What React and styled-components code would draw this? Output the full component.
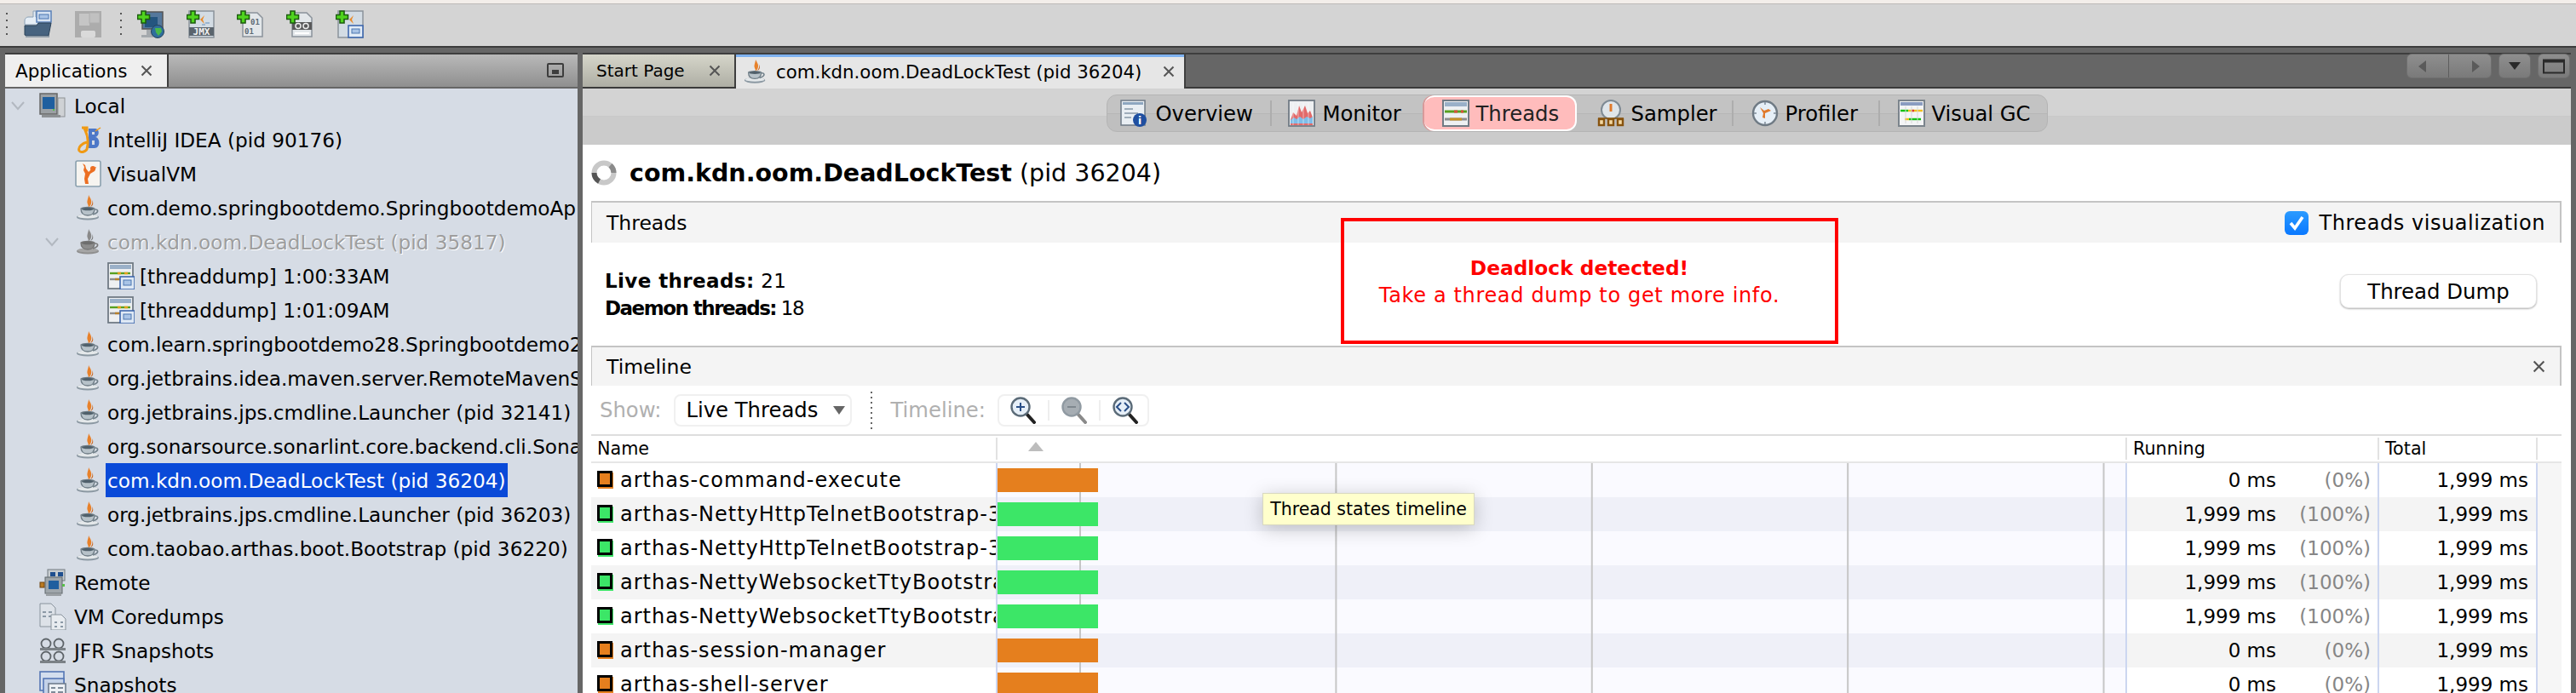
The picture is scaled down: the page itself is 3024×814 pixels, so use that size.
import React from 'react';
import styled, { createGlobalStyle } from 'styled-components';

const Global = createGlobalStyle`
  html, body { margin: 0; padding: 0; background: #666; }
  * { box-sizing: border-box; }
  body { font-family: "DejaVu Sans", "Liberation Sans", sans-serif; color: #000; }
`;

const Page = styled.div`
  width: 3024px; height: 814px; overflow: hidden;
  display: flex; flex-direction: column; background: #666;
`;
const TopStrip = styled.div`
  height: 5px; flex: none; background: #f3eeea; border-bottom: 1px solid #bdbab8;
`;
const Toolbar = styled.div`
  height: 51px; flex: none; background: #d4d4d4; border-bottom: 2px solid #3c3c3c;
  display: flex; align-items: flex-start; padding: 7px 0 0 0;
`;
const Dots = styled.div`
  width: 2px; height: 28px; margin: ${p => p.$m || '3px 0 0 7px'};
  background: repeating-linear-gradient(180deg, #555 0 2px, transparent 2px 8px);
`;
const ToolIcon = styled.svg`
  width: 33px; height: 33px; flex: none; margin-left: ${p => p.$ml}px;
  opacity: ${p => p.$dim ? 0.45 : 1};
  filter: ${p => p.$dim ? 'grayscale(1)' : 'none'};
`;
const Main = styled.div`
  flex: 1; min-height: 0; display: flex; gap: 6px; padding: 6px 6px 0 6px; background: #666;
`;
const LeftPanel = styled.section`
  width: 672px; flex: none; display: flex; flex-direction: column;
  border-top: 2px solid #3e3e3e; background: #d6dce5; overflow: hidden;
`;
const PanelHead = styled.div`
  height: 38px; flex: none; display: flex; align-items: stretch; justify-content: space-between;
  background: linear-gradient(180deg, #b9b9b9, #8f8f8f);
`;
const PanelTab = styled.div`
  width: 192px; display: flex; align-items: center; padding-left: 12px; gap: 16px;
  background: #efefef; border-right: 2px solid #3e3e3e; font-size: 21.5px;
`;
const CloseGlyph = styled.svg`
  width: ${p => p.$s || 14}px; height: ${p => p.$s || 14}px; flex: none;
`;
const Minimize = styled.div`
  width: 20px; height: 17px; margin: 10px 16px 0 0; border: 2px solid #3d3d3d; border-radius: 2px;
  display: flex; align-items: center; justify-content: center;
  &::after { content: ""; width: 8px; height: 5px; margin-top: 3px; background: #3d3d3d; }
`;
const Tree = styled.div`
  flex: 1; min-height: 0; border-top: 2px solid #666; overflow: hidden; white-space: nowrap;
`;
const TreeRow = styled.div`
  height: 40px; display: flex; align-items: center; font-size: 23.2px;
`;
const Gutter = styled.div`
  width: ${p => p.$w}px; flex: none; padding-left: ${p => p.$chev || 0}px; display: flex; align-items: center;
`;
const Chevron = styled.svg`
  width: 18px; height: 12px; flex: none;
`;
const TreeIcon = styled.svg`
  width: 32px; height: 32px; flex: none;
`;
const TreeLabel = styled.span`
  height: 40px; line-height: 41px; margin-left: ${p => p.$ml ?? 4}px; padding: 0 2px;
  background: ${p => p.$sel ? '#0a4ad8' : 'transparent'};
  color: ${p => p.$sel ? '#fff' : p.$muted ? '#9d9d9d' : '#000'};
  text-shadow: ${p => p.$muted ? '1px 1px 0 #fff' : 'none'};
`;
const RightPanel = styled.section`
  flex: 1; min-width: 0; display: flex; flex-direction: column; background: #fff;
`;
const TabBar = styled.div`
  height: 42px; flex: none; display: flex; align-items: stretch; background: #666;
  border-top: 2px solid #3e3e3e; border-bottom: 2px solid #3a3a3a;
`;
const DocTab = styled.div`
  width: ${p => p.$w}px; display: flex; align-items: center; font-size: ${p => p.$active ? 21.3 : 20}px; flex: none;
  padding-left: ${p => p.$pl}px;
  border-right: 2px solid #3e3e3e;
  background: ${p => p.$active
    ? 'linear-gradient(180deg, #7fb2f0 0 3px, #e6e6e6 3px)'
    : 'linear-gradient(180deg, #d6d6ca, #aeaea4)'};
  margin-bottom: ${p => p.$active ? '-2px' : '0'};
  position: relative;
`;
const DocTabText = styled.span`
  margin-left: ${p => p.$ml || 0}px;
`;
const TabCup = styled.svg`
  width: 30px; height: 32px; margin-left: 0; flex: none;
`;
const TabClose = styled.span`
  margin-left: ${p => p.$ml}px; display: flex;
`;
const NavButtons = styled.div`
  margin-left: auto; display: flex; gap: 8px; padding: 0 1px 0 0; align-items: flex-start;
`;
const NavBtn = styled.div`
  width: ${p => p.$w}px; height: 29px; border-radius: 6px; display: flex; margin-top: -1px;
  background: linear-gradient(180deg, #8e8e8e, #7a7a7a); border: 1px solid #6f6f6f;
  align-items: center; justify-content: space-around;
`;
const NavDiv = styled.div`
  width: 1px; align-self: stretch; background: #5d5d5d;
`;
const SubBar = styled.div`
  height: 66px; flex: none; display: flex; justify-content: center; align-items: flex-start; padding-top: 7px;
  background: linear-gradient(180deg, #d3d3d3 0 32px, #c8c8c8 32px 33px, #cbcbcb 33px);
`;
const Pill = styled.nav`
  height: 44px; display: flex; align-items: center; border-radius: 12px;
  background: linear-gradient(180deg, #c3c3c3 0 21px, #b6b6b6 21px 22px, #bfbfbf 22px);
  border: 1px solid #b4b4b4;
`;
const PillItem = styled.div`
  width: ${p => p.$w}px; height: 42px; flex: none; display: flex; align-items: center; gap: ${p => p.$gap || 8}px;
  padding-left: ${p => p.$pl}px; font-size: 24.3px; border-radius: 12px;
  ${p => p.$on ? 'background: #ffbcbc; border-bottom: 2px solid #fff; border-top: 2px solid #fff; border-right: 2px solid #fff; box-shadow: -2px 0 0 #d89a9a; color: #222;' : ''}
`;
const PillSep = styled.div`
  width: 2px; height: 30px; background: #adadad; flex: none;
`;
const PillIcon = styled.svg`
  width: 32px; height: 32px; flex: none;
`;
const Content = styled.div`
  flex: 1; min-height: 0; position: relative; padding: 0 11px 0 10px; background: #fff; overflow: hidden;
`;
const TitleRow = styled.h1`
  margin: 0; height: 66px; display: flex; align-items: center; gap: 15px; font-size: 28.5px; font-weight: 400;
`;
const Spinner = styled.svg`
  width: 30px; height: 30px; flex: none;
`;
const Strong = styled.b`
  font-weight: 700;
`;
const SectionHead = styled.div`
  height: ${p => p.$h}px; display: flex; align-items: center; justify-content: space-between;
  padding: 0 17px 0 17px; background: #f4f4f4; font-size: 23.5px;
  border-top: 2px solid #c4c4c4; border-left: 1px solid #c4c4c4; border-right: 2px solid #c4c4c4;
`;
const CheckLabel = styled.label`
  display: flex; align-items: center; gap: 12px; font-size: 24px; letter-spacing: .55px;
`;
const CheckBox = styled.span`
  width: 28px; height: 28px; border-radius: 6px; display: flex; align-items: center; justify-content: center;
  background: linear-gradient(180deg, #2b9bff, #0a78ff);
`;
const SectionBody = styled.div`
  height: 121px; display: flex; justify-content: space-between; padding: 29px 29px 0 16px;
`;
const Stats = styled.div`
  font-size: 23px; line-height: 32px;
`;
const StatLine = styled.div`
  letter-spacing: ${p => p.$ls}px;
`;
const DumpButton = styled.button`
  width: 231px; height: 40px; margin-top: 8px; border-radius: 10px; background: #fff; border: 1px solid #e2e2e2;
  box-shadow: 0 1px 2px rgba(0,0,0,.3); font: 24.4px "DejaVu Sans", sans-serif; color: #000; padding: 0;
`;
const TimelineBar = styled.div`
  height: 57px; display: flex; align-items: center; padding-left: 10px; font-size: 24.3px;
`;
const Muted = styled.span`
  color: #b0b0b0; margin-left: ${p => p.$ml || 0}px;
`;
const SelectBox = styled.div`
  width: 209px; height: 38px; margin-left: 15px; display: flex; align-items: center; justify-content: space-between;
  padding: 0 5px 0 12px; border: 2px solid #f0f0f0; border-radius: 8px; background: #fff;
`;
const Arrow = styled.svg`
  width: 16px; height: 12px; flex: none;
`;
const VDots = styled.div`
  width: 2px; height: 44px; margin-left: 22px;
  background: repeating-linear-gradient(180deg, #666 0 2px, transparent 2px 6px);
`;
const ZoomGroup = styled.div`
  width: 178px; height: 38px; margin-left: 14px; display: flex; align-items: center; padding-left: 12px; gap: 0;
  border: 2px solid #f0f0f0; border-radius: 8px;
`;
const ZoomIcon = styled.svg`
  width: 32px; height: 32px; flex: none;
`;
const ZoomSep = styled.div`
  width: 2px; height: 24px; background: #eee; margin: 0 13px; flex: none;
`;
const Table = styled.div`
  position: relative;
`;
const COLS = '475px 1326px 296px 186px 30px';
const HeadRow = styled.div`
  height: 34px; display: grid; grid-template-columns: ${COLS}; font-size: 20.7px;
  border-top: 2px solid #dedede; border-bottom: 2px solid #e6e6e6;
`;
const HeadCell = styled.div`
  display: flex; align-items: center; height: 26px; margin-top: 2px; padding-left: ${p => p.$pl || 7}px;
  border-left: ${p => p.$first ? 'none' : '2px solid #e2e2e2'};
`;
const SortMark = styled.svg`
  width: 18px; height: 11px; margin-left: 29px; margin-top: -6px;
`;
const Row = styled.div`
  height: 40px; display: grid; grid-template-columns: ${COLS}; font-size: 23px; white-space: nowrap;
`;
const NameCell = styled.div`
  display: flex; align-items: center; padding-left: 7px; overflow: hidden; font-size: 24px; letter-spacing: 1px;
  background: ${p => p.$alt ? '#f4f4f4' : '#fff'};
`;
const StateBox = styled.span`
  width: 18px; height: 19px; flex: none; margin: -4px 9px 0 0; border: 3px solid #000;
  background: ${p => p.$c}; box-shadow: 1px 2px 0 ${p => p.$c};
`;
const TimeCell = styled.div`
  padding-top: 6px;
  border-left: 2px solid #ccd6f0;
  background-color: ${p => p.$alt ? '#eff0f8' : '#fafaff'};
  background-image: linear-gradient(90deg, #c6c6c6 2px, transparent 2px);
  background-size: 300.4px 100%;
  background-position: 96px 0;
`;
const Bar = styled.div`
  width: 118px; height: 28px; background: ${p => p.$c};
`;
const NumCell = styled.div`
  display: flex; justify-content: flex-end; align-items: center; padding-right: ${p => p.$pr}px;
  border-left: 2px solid #ccd6f0; background: ${p => p.$alt ? '#f4f4f4' : '#fff'};
`;
const Pct = styled.span`
  width: 111px; text-align: right; color: #868686;
`;
const ScrollCol = styled.div`
  border-left: 2px solid #ccd6f0; background: #f6f6f6;
`;
const Tip = styled.div`
  position: absolute; left: 788px; top: 69px; width: 249px; height: 38px;
  background: #ffffcc; border: 1px solid #d8d8c0; box-shadow: 0 4px 22px rgba(0,0,0,.22);
  display: flex; align-items: center; justify-content: center; font-size: 20.5px; white-space: nowrap; z-index: 2;
`;
const Alert = styled.div`
  position: absolute; left: 890px; top: 86px; width: 584px; height: 148px; border: 4px solid #f00; color: #f00;
  display: flex; flex-direction: column; align-items: center; justify-content: center;
  padding: 2px 24px 0 0; font-size: 24px; line-height: 32px; white-space: nowrap;
`;
const AlertHead = styled.b`
  font-size: 23.3px; font-weight: 700;
`;
const AlertLine = styled.span`
  letter-spacing: .65px;
`;

const CupShapes = ({ grey }) => (
  <>
    <path d="M16 1c2 4 4 6 3 10-.6 2.400-2 3.500-3 5 .4-3-2.400-5-1.400-8.500C15 5 16 3.500 16 1z" fill={grey ? '#8a8a8a' : '#e8812a'} />
    <path d="M20 7c1 3 .5 5-2 8 3-1 4.500-4 2-8z" fill={grey ? '#777' : '#c9641c'} />
    <ellipse cx="15" cy="27" rx="13" ry="3.600" fill={grey ? '#8f8f8f' : '#8b98a2'} />
    <ellipse cx="15" cy="26" rx="12" ry="2.500" fill={grey ? '#a6a6a6' : '#e4e8ea'} />
    <path d="M7 17c3-2 13-2 16 0 0 5-2 8-8 8S7 22 7 17z" fill={grey ? '#8d8d8d' : '#b7c2c9'} stroke={grey ? '#777' : '#6f7d86'} strokeWidth="1.300" />
    <ellipse cx="15" cy="17.500" rx="7" ry="1.800" fill={grey ? '#6d6d6d' : '#50606b'} />
    <path d="M23 18c4-.5 5 2.500 1.500 4.500L21 24" fill="none" stroke={grey ? '#7a7a7a' : '#71808a'} strokeWidth="1.600" />
  </>
);
const Cup = ({ grey }) => (
  <TreeIcon viewBox="0 0 32 32"><CupShapes grey={grey} /></TreeIcon>
);
const Plus = () => (
  <path d="M5 1h5v4.500h4.500v5H10V15H5v-4.500H.5v-5H5z" fill="#4fd41e" stroke="#1d5c10" strokeWidth="1.600" />
);
const Sheet = ({ children }) => (
  <>
    <path d="M7 3h17l6 6v22H7z" fill="#e3e7ea" stroke="#8b939b" strokeWidth="1.500" />
    {children}
  </>
);
const IconOpen = () => (
  <ToolIcon $ml={19} viewBox="0 0 33 33">
    <path d="M1 12c0-2 2-4 4-4h6V1h3v7l4 3v6H1z" fill="#e6eef6" stroke="#8aa0b6" />
    <rect x="15" y="1" width="17" height="13" fill="#d8e4f2" stroke="#5a80b8" strokeWidth="1.500" />
    <rect x="18" y="5" width="11" height="5" fill="#a9c4e6" stroke="#4c76b0" />
    <path d="M1 29V18h14l2-3h15l-3 15H3z" fill="#47637f" stroke="#2b4259" />
    <rect x="2" y="30" width="28" height="2" fill="#8d9aa6" />
  </ToolIcon>
);
const IconSave = () => (
  <ToolIcon $ml={26} $dim viewBox="0 0 33 33">
    <path d="M1 1h31v31H1z" fill="#6d7f92" />
    <rect x="6" y="4" width="12" height="14" fill="#a9b6c2" />
    <rect x="18" y="3" width="12" height="12" fill="#98aabf" stroke="#6d87a6" />
    <rect x="8" y="24" width="17" height="8" rx="2" fill="#dfe3e6" />
  </ToolIcon>
);
const IconAddHost = () => (
  <ToolIcon $ml={18} viewBox="0 0 33 33">
    <rect x="6" y="2" width="24" height="20" fill="#55789c" stroke="#555" strokeWidth="1.500" />
    <rect x="9" y="8" width="15" height="12" fill="#24557f" />
    <path d="M5 29h14v3H5zM11 23h6v6h-6z" fill="#a4a9ad" />
    <circle cx="24" cy="25" r="7.500" fill="#2f6e9c" stroke="#28415a" />
    <path d="M21 21h7l1 4-4 5-3-4z" fill="#49b84a" />
    <Plus />
  </ToolIcon>
);
const IconAddJmx = () => (
  <ToolIcon $ml={25} viewBox="0 0 33 33">
    <rect x="3" y="1" width="29" height="31" fill="#d3dce4" stroke="#8b939b" strokeWidth="1.500" />
    <path d="M21 6l-5 5 5 5-2-5z" fill="#e98a2a" />
    <path d="M22 15h5M18 17h4" stroke="#8aa8c8" strokeWidth="1.500" />
    <rect x="3" y="20" width="29" height="10" fill="#5a646d" />
    <text x="17.500" y="29" textAnchor="middle" fontFamily="DejaVu Sans Mono" fontWeight="700" fontSize="11" fill="#f2f2f2">JMX</text>
    <Plus />
  </ToolIcon>
);
const IconAddCore = () => (
  <ToolIcon $ml={26} viewBox="0 0 33 33">
    <Sheet>
      <text x="16" y="17" fontFamily="DejaVu Sans Mono" fontWeight="700" fontSize="9" fill="#5c6a76">01</text>
      <text x="9" y="28" fontFamily="DejaVu Sans Mono" fontWeight="700" fontSize="9" fill="#5c6a76">01</text>
    </Sheet>
    <Plus />
  </ToolIcon>
);
const IconAddJfr = () => (
  <ToolIcon $ml={25} viewBox="0 0 33 33">
    <Sheet>
      <rect x="7" y="14" width="23" height="9" fill="#59595a" />
      <circle cx="14" cy="18.500" r="3" fill="none" stroke="#eee" strokeWidth="1.500" />
      <circle cx="23" cy="18.500" r="3" fill="none" stroke="#eee" strokeWidth="1.500" />
      <rect x="10" y="26" width="17" height="2" fill="#fff" />
    </Sheet>
    <Plus />
  </ToolIcon>
);
const IconAddSnap = () => (
  <ToolIcon $ml={25} viewBox="0 0 33 33">
    <rect x="3" y="1" width="29" height="31" fill="#d3dce4" stroke="#8b939b" strokeWidth="1.500" />
    <path d="M21 6l-5 5 5 5-2-5z" fill="#e98a2a" />
    <rect x="15" y="18" width="17" height="14" fill="#e2ecf7" stroke="#3f68ad" strokeWidth="1.600" />
    <rect x="19" y="22" width="9" height="5" fill="#a9c4e6" stroke="#4c76b0" />
    <Plus />
  </ToolIcon>
);
const IconLocal = () => (
  <TreeIcon viewBox="0 0 32 32">
    <rect x="1" y="2" width="20" height="24" fill="#9ba0a4" stroke="#666" strokeWidth="1.500" />
    <rect x="4" y="6" width="14" height="14" fill="#1f5f9f" />
    <rect x="16" y="20" width="2" height="2" fill="#58c04a" />
    <rect x="22" y="7" width="8" height="22" fill="#cfd2d5" stroke="#8d9194" />
    <rect x="3" y="27" width="22" height="3" fill="#8d9194" />
  </TreeIcon>
);
const IconIdea = () => (
  <TreeIcon viewBox="0 0 32 32">
    <path d="M16 3h8c5 0 5 9 0 10 6 1 6 13-1 13h-7z" fill="#4d78c8" />
    <rect x="20" y="7" width="3" height="3" fill="#d6dce5" />
    <rect x="20" y="17" width="3" height="5" fill="#d6dce5" />
    <path d="M8 2h6v3h-2c3 6 4 15 2 22-1 3-7 5-9 2-2-4 4-9 9-10" fill="none" stroke="#f09a14" strokeWidth="3" />
    <path d="M24 6l6-4" stroke="#f09a14" strokeWidth="1.500" />
  </TreeIcon>
);
const IconVisualVm = () => (
  <TreeIcon viewBox="0 0 32 32">
    <rect x="1" y="1" width="29" height="30" rx="2" fill="#f6f4f0" stroke="#8aa0ae" strokeWidth="1.600" />
    <path d="M9 4l2 4-1 4 2 4-1 6 1 6h4l-1-6 3-6 5-3 2-5-5 2-4 4-3-4-1-4z" fill="#ec6f22" />
    <circle cx="21" cy="10" r="3" fill="#ec6f22" />
  </TreeIcon>
);
const IconDump = () => (
  <TreeIcon viewBox="0 0 32 32">
    <rect x="1" y="1" width="29" height="30" fill="#eef0f2" stroke="#707a84" strokeWidth="1.800" />
    <rect x="3" y="3" width="25" height="5" fill="#9ab0c8" />
    <path d="M3 13h24" stroke="#58a020" strokeWidth="2.400" />
    <path d="M12 13h4M20 13h4" stroke="#e4a11b" strokeWidth="2.400" />
    <path d="M3 20h14" stroke="#8d8d8d" strokeWidth="2.400" />
    <path d="M9 20h6" stroke="#b7812e" strokeWidth="2.400" />
    <rect x="15" y="17" width="17" height="15" fill="#dfe9f5" stroke="#3f68ad" strokeWidth="1.600" />
    <rect x="19" y="21" width="9" height="6" fill="#a9c4e6" stroke="#4c76b0" />
  </TreeIcon>
);
const IconRemote = () => (
  <TreeIcon viewBox="0 0 32 32">
    <rect x="10" y="1" width="20" height="13" fill="#c6ccd0" stroke="#737a80" />
    <rect x="13" y="4" width="6" height="5" fill="#1f4f8f" />
    <rect x="22" y="4" width="6" height="5" fill="#1f4f8f" />
    <rect x="7" y="10" width="20" height="19" fill="#9fa6ab" stroke="#5f666b" />
    <rect x="11" y="14" width="12" height="10" fill="#1f5f9f" />
    <rect x="1" y="16" width="5" height="6" fill="#bb7a20" stroke="#6e4510" />
    <rect x="27" y="18" width="3" height="3" fill="#58c04a" />
    <rect x="8" y="29" width="18" height="3" fill="#9a9fa3" />
  </TreeIcon>
);
const IconCore = () => (
  <TreeIcon viewBox="0 0 32 32">
    <path d="M1 1h13l5 5v22H1z" fill="#dde2e8" stroke="#89939c" />
    <path d="M4 11h4M11 11h4M4 16h4M11 16h4" stroke="#8b99a6" strokeWidth="2" />
    <path d="M14 14h12l5 5v13H14z" fill="#e8ecf0" stroke="#89939c" />
    <path d="M18 23h3M25 23h3M18 28h3M25 28h3" stroke="#8b99a6" strokeWidth="2" />
  </TreeIcon>
);
const IconJfr = () => (
  <TreeIcon viewBox="0 0 32 32">
    <g fill="none" stroke="#5e6469" strokeWidth="1.800">
      <circle cx="8" cy="8" r="5.500" /><circle cx="23" cy="8" r="5.500" />
      <circle cx="8" cy="23" r="5.500" /><circle cx="23" cy="23" r="5.500" />
    </g>
    <rect x="1" y="13" width="30" height="3" fill="#7b8186" />
    <rect x="1" y="28" width="30" height="3" fill="#7b8186" />
  </TreeIcon>
);
const IconSnaps = () => (
  <TreeIcon viewBox="0 0 32 32">
    <rect x="1" y="1" width="28" height="22" fill="#d3deee" stroke="#5476b4" strokeWidth="1.600" />
    <rect x="5" y="9" width="24" height="18" fill="#c4d2e8" stroke="#5476b4" strokeWidth="1.600" />
    <rect x="11" y="15" width="20" height="16" fill="#eef1f5" stroke="#6f7d8e" strokeWidth="1.600" />
    <path d="M14 20h5M22 20h6M14 25h5M22 25h6" stroke="#7d8a98" strokeWidth="2" />
  </TreeIcon>
);
const NavOverview = () => (
  <PillIcon viewBox="0 0 32 32">
    <rect x="1" y="1" width="28" height="29" fill="#e9eef3" stroke="#6e7a86" strokeWidth="1.500" />
    <rect x="3" y="3" width="24" height="3" fill="#8ea6c0" />
    <path d="M5 11h10M5 16h16M5 21h8" stroke="#9fadba" strokeWidth="2" />
    <circle cx="23" cy="24" r="8" fill="#1f4fa0" />
    <text x="23" y="29" textAnchor="middle" fontFamily="DejaVu Sans" fontWeight="700" fontSize="12" fill="#fff">i</text>
  </PillIcon>
);
const NavMonitor = () => (
  <PillIcon viewBox="0 0 32 32">
    <rect x="1" y="1" width="30" height="30" fill="#eef0f2" stroke="#707a84" strokeWidth="1.800" />
    <path d="M3 24l3-9 4 4 3-12 3 8 4-8 3 9 3-3 3 8v9H3z" fill="#e26a6a" />
    <path d="M3 24l4-3 3 2 4-3 4 3 4-3 4 2 3-2v8H3z" fill="#7fbde8" />
    <path d="M6 4v26M12 4v26M18 4v26M24 4v26" stroke="#fff" strokeOpacity=".5" />
  </PillIcon>
);
const NavThreads = () => (
  <PillIcon viewBox="0 0 32 32">
    <rect x="1" y="1" width="30" height="30" fill="#eef0f2" stroke="#707a84" strokeWidth="2" />
    <rect x="3" y="3" width="26" height="5" fill="#9ab0c8" />
    <path d="M3 14h26" stroke="#58a020" strokeWidth="3" />
    <path d="M14 14h4M22 14h3" stroke="#d8503a" strokeWidth="3" />
    <path d="M3 23h26" stroke="#8d8d8d" strokeWidth="3" />
    <path d="M9 23h14" stroke="#c79226" strokeWidth="3" />
  </PillIcon>
);
const NavSampler = () => (
  <PillIcon viewBox="0 0 32 32">
    <circle cx="16" cy="12" r="11" fill="#dfe5ea" stroke="#7e8a94" strokeWidth="2" />
    <path d="M16 5v9" stroke="#e07a2c" strokeWidth="3" />
    <g fill="#f3d7a0" stroke="#87530f" strokeWidth="2.400">
      <rect x="2" y="23" width="6" height="7" /><rect x="13" y="23" width="6" height="7" /><rect x="24" y="23" width="6" height="7" />
    </g>
    <path d="M1 22h30" stroke="#87530f" strokeWidth="1.500" />
  </PillIcon>
);
const NavProfiler = () => (
  <PillIcon viewBox="0 0 32 32">
    <circle cx="16" cy="16" r="14" fill="#e6eff7" stroke="#6f7a84" strokeWidth="2.400" />
    <path d="M10 9l5 4 5-2 3 2-7 3v6l-3-1 1-5z" fill="#e07a2c" />
    <path d="M16 3v3M16 26v3M3 16h3M26 16h3" stroke="#7d8a98" strokeWidth="1.500" />
  </PillIcon>
);
const NavGc = () => (
  <PillIcon viewBox="0 0 32 32">
    <rect x="1" y="1" width="30" height="30" fill="#f4f5f6" stroke="#7b848c" strokeWidth="2" />
    <rect x="3" y="3" width="26" height="4" fill="#8a9cc0" />
    <path d="M3 13h9" stroke="#12c212" strokeWidth="2.400" />
    <path d="M12 13h17" stroke="#f0c020" strokeWidth="2.400" />
    <path d="M16 13h3" stroke="#e03a2a" strokeWidth="2.400" />
    <path d="M8 23h5" stroke="#f0c020" strokeWidth="2.400" />
    <path d="M13 23h14" stroke="#12c212" strokeWidth="2.400" />
    <path d="M9 8v20M16 8v20M23 8v20" stroke="#d8d8d8" />
  </PillIcon>
);
const Magnifier = ({ kind }) => {
  const c = kind === 'minus' ? '#909aa2' : '#5b6b78';
  return (
    <ZoomIcon viewBox="0 0 32 32">
      <path d="M20 20l9 10" stroke={kind === 'minus' ? '#8a8a8a' : '#222'} strokeWidth="4" strokeLinecap="round" />
      <circle cx="13" cy="12" r="10.500" fill={kind === 'minus' ? '#a6adb3' : '#e6eff8'} stroke={c} strokeWidth="2.400" />
      {kind === 'plus' && <path d="M13 7v10M8 12h10" stroke="#2a4f88" strokeWidth="2" />}
      {kind === 'minus' && <path d="M8 12h10" stroke="#7f888f" strokeWidth="2" />}
      {kind === 'fit' && <path d="M11 7l-5 5 5 5M15 7l5 5-5 5" fill="none" stroke="#2a4f88" strokeWidth="2" />}
    </ZoomIcon>
  );
};
const X = ({ s, c = '#555' }) => (
  <CloseGlyph $s={s} viewBox="0 0 14 14">
    <path d="M1.500 1.500l11 11M12.500 1.500l-11 11" stroke={c} strokeWidth="2" />
  </CloseGlyph>
);
const Down = () => (
  <Chevron viewBox="0 0 18 12"><path d="M2 2l7 8 7-8" fill="none" stroke="#b2b8c0" strokeWidth="2" /></Chevron>
);

const ORANGE = '#e57f1e';
const GREEN = '#3ce667';
const treeRows = [
  { w: 40, chev: 6, icon: <IconLocal />, text: 'Local', ml: 7 },
  { w: 82, icon: <IconIdea />, text: 'IntelliJ IDEA (pid 90176)' },
  { w: 82, icon: <IconVisualVm />, text: 'VisualVM' },
  { w: 82, icon: <Cup />, text: 'com.demo.springbootdemo.SpringbootdemoAp' },
  { w: 82, chev: 46, icon: <Cup grey />, text: 'com.kdn.oom.DeadLockTest (pid 35817)', muted: true },
  { w: 120, icon: <IconDump />, text: '[threaddump] 1:00:33AM' },
  { w: 120, icon: <IconDump />, text: '[threaddump] 1:01:09AM' },
  { w: 82, icon: <Cup />, text: 'com.learn.springbootdemo28.Springbootdemo2' },
  { w: 82, icon: <Cup />, text: 'org.jetbrains.idea.maven.server.RemoteMavenS' },
  { w: 82, icon: <Cup />, text: 'org.jetbrains.jps.cmdline.Launcher (pid 32141)' },
  { w: 82, icon: <Cup />, text: 'org.sonarsource.sonarlint.core.backend.cli.Sona' },
  { w: 82, icon: <Cup />, text: 'com.kdn.oom.DeadLockTest (pid 36204)', sel: true },
  { w: 82, icon: <Cup />, text: 'org.jetbrains.jps.cmdline.Launcher (pid 36203)' },
  { w: 82, icon: <Cup />, text: 'com.taobao.arthas.boot.Bootstrap (pid 36220)' },
  { w: 40, icon: <IconRemote />, text: 'Remote', ml: 7 },
  { w: 40, icon: <IconCore />, text: 'VM Coredumps', ml: 7 },
  { w: 40, icon: <IconJfr />, text: 'JFR Snapshots', ml: 7 },
  { w: 40, icon: <IconSnaps />, text: 'Snapshots', ml: 7 },
];
const threads = [
  ['arthas-command-execute', ORANGE, '0 ms', '(0%)'],
  ['arthas-NettyHttpTelnetBootstrap-3', GREEN, '1,999 ms', '(100%)'],
  ['arthas-NettyHttpTelnetBootstrap-3', GREEN, '1,999 ms', '(100%)'],
  ['arthas-NettyWebsocketTtyBootstrap', GREEN, '1,999 ms', '(100%)'],
  ['arthas-NettyWebsocketTtyBootstrap', GREEN, '1,999 ms', '(100%)'],
  ['arthas-session-manager', ORANGE, '0 ms', '(0%)'],
  ['arthas-shell-server', ORANGE, '0 ms', '(0%)'],
];

export default function App() {
  return (
    <Page>
      <Global />
      <TopStrip />
      <Toolbar>
        <Dots />
        <IconOpen />
        <IconSave />
        <Dots $m="3px 0 0 21px" />
        <IconAddHost />
        <IconAddJmx />
        <IconAddCore />
        <IconAddJfr />
        <IconAddSnap />
      </Toolbar>
      <Main>
        <LeftPanel>
          <PanelHead>
            <PanelTab>Applications <X /></PanelTab>
            <Minimize />
          </PanelHead>
          <Tree>
            {treeRows.map((r, i) => (
              <TreeRow key={i}>
                <Gutter $w={r.w} $chev={r.chev}>{r.chev ? <Down /> : null}</Gutter>
                {r.icon}
                <TreeLabel $ml={r.ml} $sel={r.sel} $muted={r.muted}>{r.text}</TreeLabel>
              </TreeRow>
            ))}
          </Tree>
        </LeftPanel>
        <RightPanel>
          <TabBar>
            <DocTab $w={180} $pl={16}>
              <DocTabText>Start Page</DocTabText>
              <TabClose $ml={28}><X /></TabClose>
            </DocTab>
            <DocTab $w={528} $pl={8} $active>
              <TabCup viewBox="0 0 32 32"><CupShapes /></TabCup>
              <DocTabText $ml={9}>com.kdn.oom.DeadLockTest (pid 36204)</DocTabText>
              <TabClose $ml={25}><X /></TabClose>
            </DocTab>
            <NavButtons>
              <NavBtn $w={100}>
                <svg width="10" height="14" viewBox="0 0 10 14"><path d="M9 0v14L0 7z" fill="#5a5a5a" /></svg>
                <NavDiv />
                <svg width="10" height="14" viewBox="0 0 10 14"><path d="M1 0v14l9-7z" fill="#5a5a5a" /></svg>
              </NavBtn>
              <NavBtn $w={38}>
                <svg width="14" height="9" viewBox="0 0 14 9"><path d="M0 0h14L7 9z" fill="#2a2a2a" /></svg>
              </NavBtn>
              <NavBtn $w={38}>
                <svg width="26" height="18" viewBox="0 0 26 18"><rect x="1" y="1.500" width="24" height="15" fill="none" stroke="#2a2a2a" strokeWidth="2" /><rect x="1" y="1" width="24" height="3.500" fill="#2a2a2a" /></svg>
              </NavBtn>
            </NavButtons>
          </TabBar>
          <SubBar>
            <Pill>
              <PillItem $w={191} $pl={15} $gap={10}><NavOverview />Overview</PillItem>
              <PillSep />
              <PillItem $w={179} $pl={19} $gap={9}><NavMonitor />Monitor</PillItem>
              <PillItem $w={179} $pl={21} $on><NavThreads />Threads</PillItem>
              <PillItem $w={182} $pl={24}><NavSampler />Sampler</PillItem>
              <PillSep />
              <PillItem $w={170} $pl={21}><NavProfiler />Profiler</PillItem>
              <PillSep />
              <PillItem $w={196} $pl={21}><NavGc />Visual GC</PillItem>
            </Pill>
          </SubBar>
          <Content>
            <TitleRow>
              <Spinner viewBox="0 0 30 30">
                <circle cx="15" cy="15" r="11.500" fill="none" stroke="#c8c8c8" strokeWidth="6" />
                <path d="M3.500 15a11.500 11.500 0 0 0 6 10" fill="none" stroke="#555" strokeWidth="6" />
                <path d="M26.500 15a11.500 11.500 0 0 0-4-8.700" fill="none" stroke="#8a8a8a" strokeWidth="6" />
              </Spinner>
              <span><Strong>com.kdn.oom.DeadLockTest</Strong> (pid 36204)</span>
            </TitleRow>
            <SectionHead $h={49}>
              <span>Threads</span>
              <CheckLabel>
                <CheckBox>
                  <svg width="20" height="18" viewBox="0 0 20 18"><path d="M3 9l5 6L17 2" fill="none" stroke="#fff" strokeWidth="3.600" /></svg>
                </CheckBox>
                Threads visualization
              </CheckLabel>
            </SectionHead>
            <SectionBody>
              <Stats>
                <StatLine $ls={0.4}><Strong>Live threads:</Strong> 21</StatLine>
                <StatLine $ls={-1.5}><Strong>Daemon threads:</Strong> 18</StatLine>
              </Stats>
              <DumpButton>Thread Dump</DumpButton>
            </SectionBody>
            <SectionHead $h={47}>
              <span>Timeline</span>
              <X s={15} c="#555" />
            </SectionHead>
            <TimelineBar>
              <Muted>Show:</Muted>
              <SelectBox>
                Live Threads
                <Arrow viewBox="0 0 16 12"><path d="M1 1h14L8 11z" fill="#666" /></Arrow>
              </SelectBox>
              <VDots />
              <Muted $ml={21}>Timeline:</Muted>
              <ZoomGroup>
                <Magnifier kind="plus" />
                <ZoomSep />
                <Magnifier kind="minus" />
                <ZoomSep />
                <Magnifier kind="fit" />
              </ZoomGroup>
            </TimelineBar>
            <Table>
              <HeadRow>
                <HeadCell $first>Name</HeadCell>
                <HeadCell $pl={0}>
                  <SortMark viewBox="0 0 18 11"><path d="M9 0l9 11H0z" fill="#bdbdbd" /></SortMark>
                </HeadCell>
                <HeadCell>Running</HeadCell>
                <HeadCell>Total</HeadCell>
                <HeadCell />
              </HeadRow>
              {threads.map((t, i) => {
                const alt = i % 2 === 1;
                return (
                  <Row key={i}>
                    <NameCell $alt={alt}><StateBox $c={t[1]} />{t[0]}</NameCell>
                    <TimeCell $alt={alt}><Bar $c={t[1]} /></TimeCell>
                    <NumCell $alt={alt} $pr={8}>{t[2]}<Pct>{t[3]}</Pct></NumCell>
                    <NumCell $alt={alt} $pr={9}>1,999 ms</NumCell>
                    <ScrollCol />
                  </Row>
                );
              })}
              <Tip>Thread states timeline</Tip>
            </Table>
            <Alert>
              <AlertHead>Deadlock detected!</AlertHead>
              <AlertLine>Take a thread dump to get more info.</AlertLine>
            </Alert>
          </Content>
        </RightPanel>
      </Main>
    </Page>
  );
}
